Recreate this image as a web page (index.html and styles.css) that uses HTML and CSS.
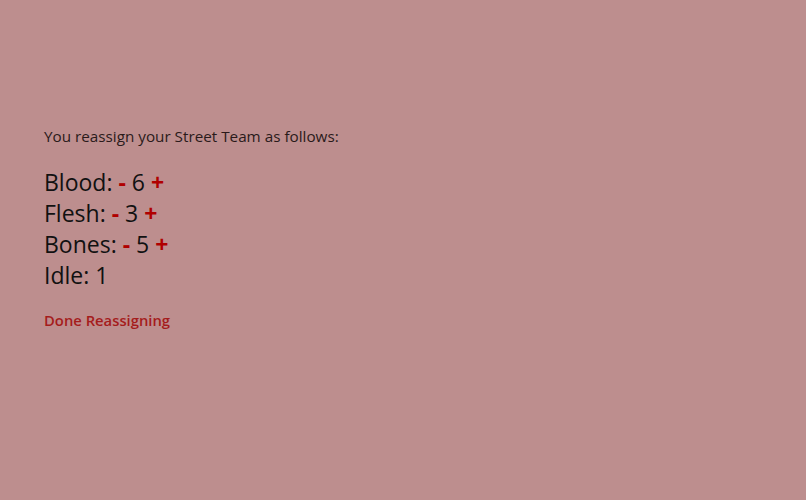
FILE: index.html
```html
<!DOCTYPE html>
<html>
<head>
<meta charset="utf-8">
<link rel="stylesheet" href="styles.css">
</head>
<body>
<main class="panel">
  <p class="intro">You reassign your Street Team as follows:</p>
  <div class="rows">
    <div class="row">Blood: <span class="btn">-</span> 6 <span class="btn">+</span></div>
    <div class="row">Flesh: <span class="btn">-</span> 3 <span class="btn">+</span></div>
    <div class="row">Bones: <span class="btn">-</span> 5 <span class="btn">+</span></div>
    <div class="row">Idle: 1</div>
  </div>
  <a class="done">Done Reassigning</a>
</main>
</body>
</html>
```
FILE: styles.css
```css
html, body {
  margin: 0;
  padding: 0;
  background: #bd8e8e;
  height: 100%;
}
body {
  font-family: "Open Sans", sans-serif;
  color: #111;
}
.panel {
  padding: 125px 44px 0;
}
.intro {
  margin: 0 0 20px;
  font-size: 15.25px;
  line-height: 22px;
  color: #2a1a1a;
}
.rows {
  font-size: 23px;
  line-height: 31px;
}
.btn {
  color: #b00000;
  font-weight: 700;
}
.done {
  display: inline-block;
  margin-top: 19px;
  font-size: 14.8px;
  font-weight: 600;
  color: #a51c1c;
}
```
